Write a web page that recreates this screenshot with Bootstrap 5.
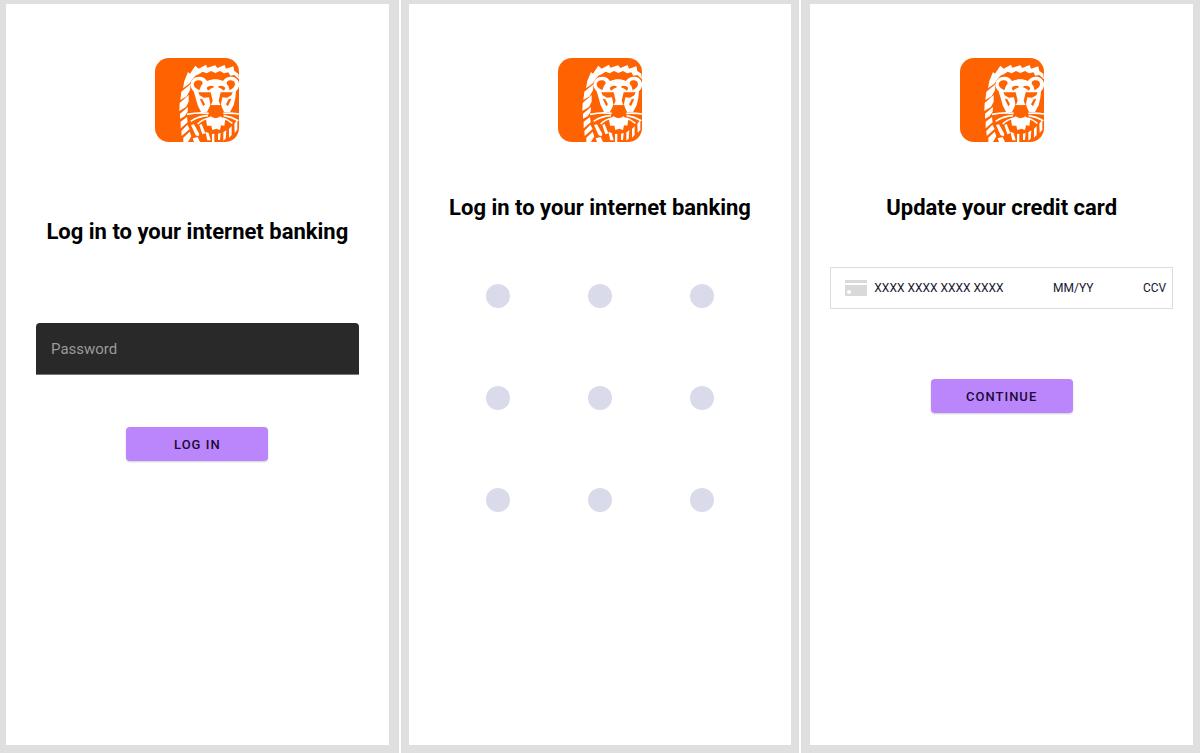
<!DOCTYPE html>
<html lang="en">
<head>
<meta charset="utf-8">
<meta name="viewport" content="width=device-width, initial-scale=1">
<title>Internet banking screens</title>
<link href="https://cdn.jsdelivr.net/npm/bootstrap@5.3.0/dist/css/bootstrap.min.css" rel="stylesheet">
<style>
body{font-family:Roboto,"Liberation Sans",sans-serif;background:#fff;color:#000}
.screens{display:grid;grid-template-columns:repeat(3,minmax(0,1fr));gap:2px}
.phone{background:#dfdfdf;padding:4px 8px 8px}
.phone:first-child{padding-left:6px;padding-right:10px}
.phone:last-child{padding-left:9px;padding-right:7px}
.pane{background:#fff;padding:54px 20px 20px}
.logo{width:84px;height:84px;border-radius:14px}
.title{font-size:22px;line-height:28px;font-weight:700;margin:52px 0 0;white-space:nowrap}
.title-low{margin-top:76px}
.pwd{width:calc(100% - 20px);height:52px;margin-top:77px;padding:1px 15px 0;background:#292929;color:#fff;border:0;border-bottom:1px solid #777;border-radius:4px 4px 0 0;font-size:15px}
.pwd::placeholder{color:#9a9a9a}
.btn-violet{--bs-btn-bg:#bb86fc;--bs-btn-color:#1c0b33;--bs-btn-hover-bg:#a970f0;--bs-btn-active-bg:#a970f0;--bs-btn-border-radius:4px;width:142px;height:34px;padding:1px 0 0;border:0;font-size:13px;font-weight:500;letter-spacing:1px;box-shadow:0 1px 2px rgba(0,0,0,.2)}
.pwd-btn{margin-top:52px}
.dots{display:grid;grid-template-columns:repeat(3,24px);gap:78px;margin-top:62px}
.dot{width:24px;height:24px;border:0;padding:0;border-radius:50%;background:#d9dbeb}
.cardrow{width:100%;height:42px;margin-top:45px;border:1px solid #dcdcdc;padding:0 5px 0 14px}
.cardrow input{border:0;padding:0;background:none;font-size:12px;min-width:0;color:#15152f}
.cardrow input::placeholder{color:#15152f;opacity:1}
.num{width:140px;margin-left:7px}
.exp{width:42px;margin-left:auto}
.ccv{width:24px;margin-left:48px}
.card-btn{margin-top:70px}
</style>
</head>
<body>
<svg class="d-none" xmlns="http://www.w3.org/2000/svg">
<symbol id="lion" viewBox="15 15 252 252">
<rect x="15" y="15" width="252" height="252" fill="#ff6200"/>
<g fill="#fff">
<path d="M103 84L114 57L120 62L136 38L146 47L168 35L172 44L196 37L202 45L224 36L228 47L250 40L253 54L265 62L267 79L253 66L241 68L235 58L222 61L210 54L196 60L183 54L170 61L158 56L146 64L136 68L127 79L118 92L99 106Z"/>
<path d="M94 116L122 93L120 112L110 130L91 141ZM89 150L116 126L116 146L108 162L88 174ZM90 182L114 162L113 176L104 190L90 197ZM92 206L111 192L113 208L92 226ZM94 234L112 215L119 228L95 249ZM100 254L119 236L124 250L114 267H100Z"/>
<path d="M123 216L132 214L148 243L146 250L137 247ZM148 216L155 213L166 241L157 244ZM128 256L143 252L150 267H132ZM166 236L176 240L182 262L172 262ZM186 243L193 242L193 267H186ZM204 242L212 240L210 261H204ZM220 238L229 232L227 257L220 263ZM237 228L245 219L245 246L237 254ZM253 212L262 200L262 230L254 240Z"/>
<path d="M131 115C112 95 124 71 148 71C160 71 167 77 171 84C188 77 204 77 219 84C224 73 244 66 257 75C271 86 270 103 258 115L256 135L251 157L240 177L222 177L213 157H181L171 177L153 177L143 157L137 135Z"/>
<path d="M168 199L182 190L196 196L210 190L226 199L223 218L213 217L210 231L199 227L187 231L184 218L171 218Z"/>
</g>
<g fill="#ff6200">
<path d="M138 106C124 94 134 80 148 82C159 83 161 93 153 98L148 112ZM248 106C262 94 253 80 240 82C229 83 227 93 235 98L239 112Z"/>
<path d="M170 105C176 97 187 97 193 102L182 107L174 113ZM203 102C209 97 220 97 226 105L222 113L214 107Z"/>
<path d="M145 118H182L188 143L182 158L177 133L162 134L149 127ZM248 118H212L206 143L212 158L217 133L231 134L244 127Z"/>
<path d="M149 137L157 139L165 154L160 160ZM244 137L236 139L228 154L234 160Z"/>
<path d="M179 157H215L208 171L200 177V187L212 192L196 195L183 191L194 187V177L186 171Z"/>
</g>
<path d="M176 181Q147 177 111 184M174 188Q144 190 122 205M178 195Q157 199 143 213M220 181Q242 179 267 183M221 188Q244 191 265 203M219 195Q235 200 247 211" fill="none" stroke="#fff" stroke-width="5"/>
</symbol>
</svg>
<main class="screens min-vh-100">
<section class="phone d-flex">
<form class="pane flex-fill d-flex flex-column align-items-center">
<svg class="logo" role="img" aria-label="Lion logo"><use href="#lion"/></svg>
<h1 class="title title-low">Log in to your internet banking</h1>
<label class="visually-hidden" for="pwd">Password</label>
<input class="pwd" id="pwd" type="password" placeholder="Password" autocomplete="off">
<button class="btn btn-violet pwd-btn" type="button">LOG IN</button>
</form>
</section>
<section class="phone d-flex">
<div class="pane flex-fill d-flex flex-column align-items-center">
<svg class="logo" role="img" aria-label="Lion logo"><use href="#lion"/></svg>
<h2 class="title">Log in to your internet banking</h2>
<div class="dots">
<button class="dot" type="button" aria-label="Dot 1"></button><button class="dot" type="button" aria-label="Dot 2"></button><button class="dot" type="button" aria-label="Dot 3"></button>
<button class="dot" type="button" aria-label="Dot 4"></button><button class="dot" type="button" aria-label="Dot 5"></button><button class="dot" type="button" aria-label="Dot 6"></button>
<button class="dot" type="button" aria-label="Dot 7"></button><button class="dot" type="button" aria-label="Dot 8"></button><button class="dot" type="button" aria-label="Dot 9"></button>
</div>
</div>
</section>
<section class="phone d-flex">
<form class="pane flex-fill d-flex flex-column align-items-center">
<svg class="logo" role="img" aria-label="Lion logo"><use href="#lion"/></svg>
<h2 class="title">Update your credit card</h2>
<div class="cardrow d-flex align-items-center">
<svg class="flex-shrink-0" width="22" height="16" viewBox="0 0 22 16" aria-hidden="true"><path fill="#d9d9d9" d="M1 0H21Q22 0 22 1V3H0V1Q0 0 1 0ZM0 5H22V15Q22 16 21 16H1Q0 16 0 15Z"/><circle cx="4" cy="12" r="2" fill="#fff"/></svg>
<input class="num" type="text" aria-label="Card number" placeholder="XXXX XXXX XXXX XXXX" autocomplete="off">
<input class="exp" type="text" aria-label="Expiry date" placeholder="MM/YY" autocomplete="off">
<input class="ccv" type="text" aria-label="CCV" placeholder="CCV" autocomplete="off">
</div>
<button class="btn btn-violet card-btn" type="button">CONTINUE</button>
</form>
</section>
</main>
<script src="https://cdn.jsdelivr.net/npm/bootstrap@5.3.0/dist/js/bootstrap.bundle.min.js"></script>
</body>
</html>
